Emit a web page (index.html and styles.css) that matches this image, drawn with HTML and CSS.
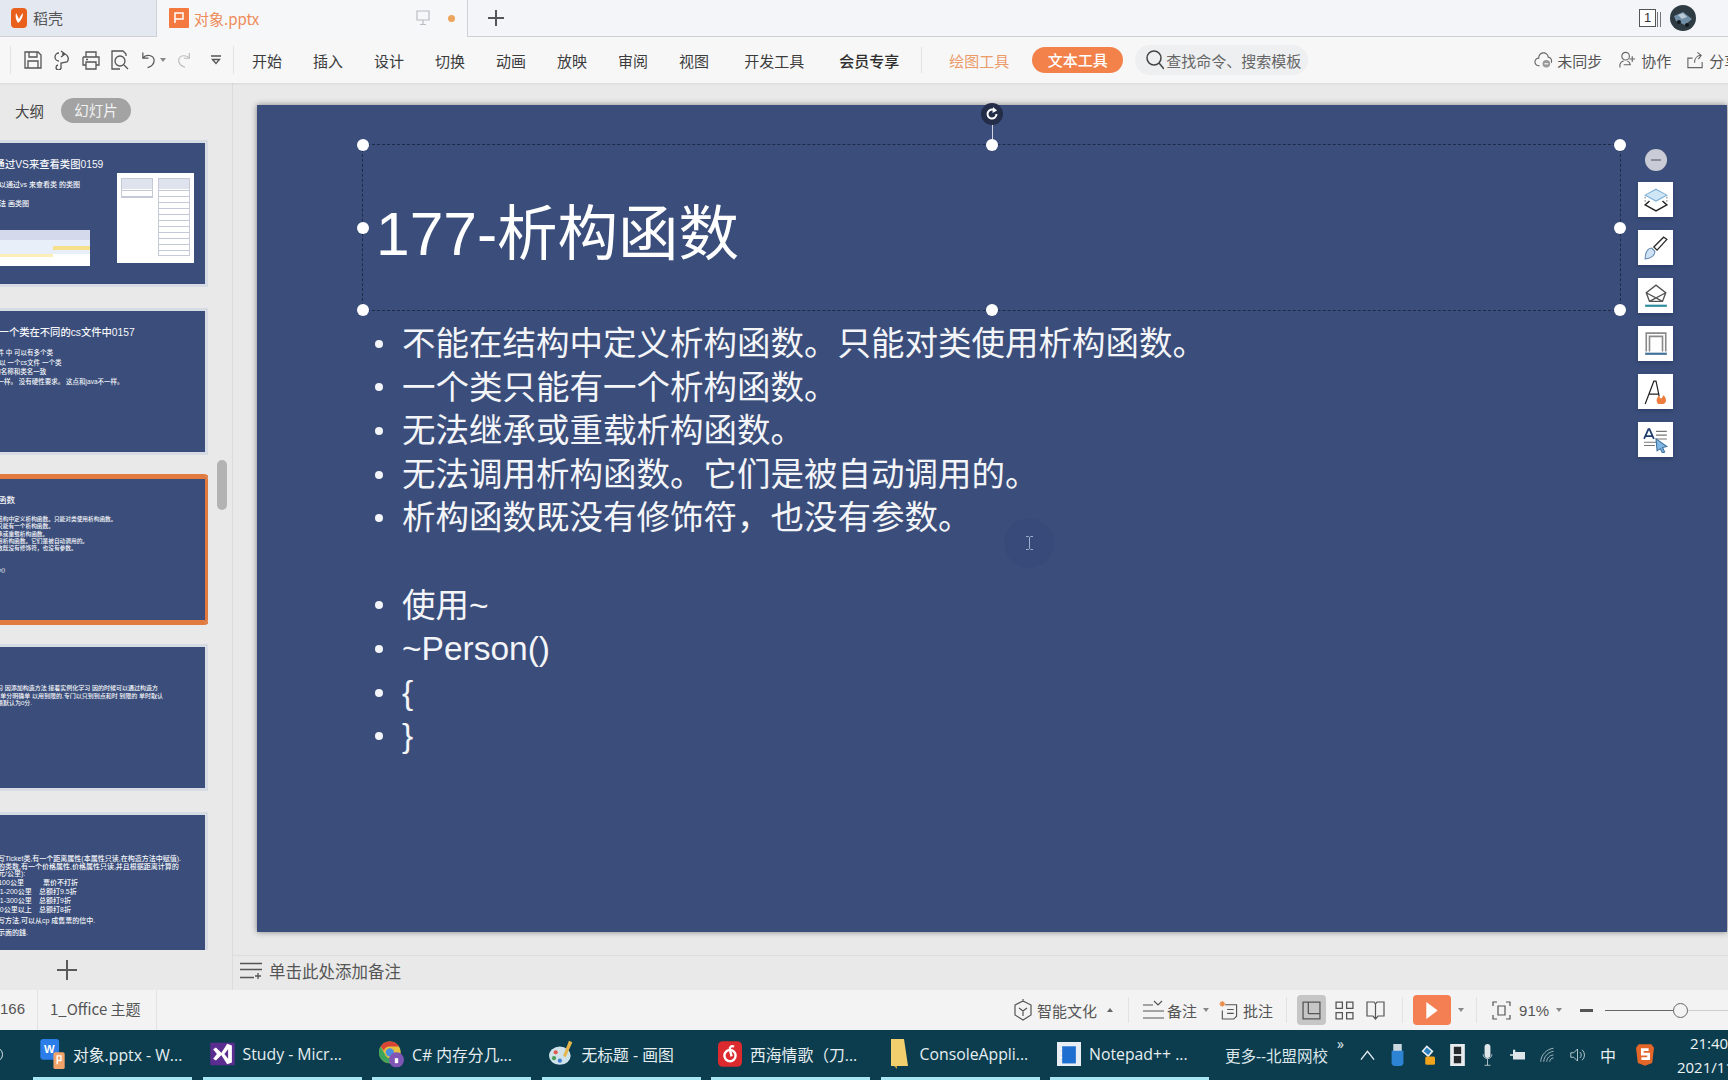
FILE: index.html
```html
<!DOCTYPE html>
<html lang="zh-CN">
<head>
<meta charset="utf-8">
<title>对象.pptx - WPS</title>
<link rel="stylesheet" href="styles.css">
</head>
<body>
<header class="tabbar">
  <div class="tab tab-home">
    <svg class="tab-logo" viewBox="0 0 16 20"><path fill="#e8601c" d="M4 0h8a4 4 0 0 1 4 4v12a4 4 0 0 1-4 4H4a4 4 0 0 1-4-4V4a4 4 0 0 1 4-4z"/><path fill="#fff" d="M5 5c-1 4 0 7 2 10 3-2 5-6 5-10-2 2-3 4-4 6-1-2-2-4-3-6z"/></svg>
    <span>稻壳</span>
  </div>
  <div class="tab tab-active">
    <svg class="tab-logo-p" viewBox="0 0 20 20"><rect width="20" height="20" rx="1" fill="#f4793f"/><path fill="none" stroke="#fff" stroke-width="1.5" d="M6 15V5h8v6H6"/></svg>
    <span class="tab-name">对象.pptx</span>
    <svg class="tab-mon" viewBox="0 0 14 16"><path fill="none" stroke="#b9bcc2" stroke-width="1.2" d="M1 1h12v9H1zM7 10v4M4 14.500h6"/></svg>
    <span class="tab-dot"></span>
  </div>
  <svg class="tab-plus" viewBox="0 0 16 16"><path stroke="#555" stroke-width="2" d="M8 0v16M0 8h16"/></svg>
  <div class="tabbar-right">
    <span class="page-count">1</span>
    <span class="page-bars"></span>
    <svg class="avatar" viewBox="0 0 26 26"><circle cx="13" cy="13" r="13" fill="#2f3b42"/><path fill="#6f8ea6" d="M4 11l9-4 9 7-7 6-9-4z"/><path fill="#b9c9d6" d="M8 10l5-2 4 4-5 2z"/><circle cx="9" cy="17" r="2" fill="#11181c"/><circle cx="17" cy="20" r="2" fill="#11181c"/></svg>
  </div>
</header>

<nav class="toolbar">
  <div class="quick">
    <svg class="qi" viewBox="0 0 20 20"><path d="M2 2h13l3 3v13H2zM6 2v5h8V2M5 18v-7h10v7"/></svg>
    <svg class="qi" viewBox="0 0 20 20"><path d="M7 3a4 4 0 0 0 0 8M9 1l4 3-4 3M13 4h-3M13 4a5 5 0 0 1 2 8l-6 1v6M6 15a2.500 2.500 0 1 0 3 3"/></svg>
    <svg class="qi" viewBox="0 0 20 20"><path d="M5 7V2h10v5M2 7h16v8h-3M5 15H2V7M5 12h10v7H5zM5 9.500h2"/></svg>
    <svg class="qi qi-wide" viewBox="0 0 20 20"><path d="M10 19H2V1h11l3 3v2"/><circle cx="10" cy="11" r="5"/><path d="M14 15l4 4"/></svg>
    <svg class="qi qi-undo" viewBox="0 0 18 20"><path d="M3 2v6h6M3 8c3-4 11-4 12 2 0 4-3 7-7 8"/></svg>
    <span class="caret"></span>
    <svg class="qi qi-redo" viewBox="0 0 18 20"><path d="M15 2v6H9M15 8c-3-4-11-4-12 2 0 4 3 7 7 8"/></svg>
    <svg class="qi qi-more" viewBox="0 0 12 12"><path d="M1 2h10M2.500 5.500l3.500 4 3.500-4z"/></svg>
  </div>
  <div class="menu">
    <span>开始</span><span>插入</span><span>设计</span><span>切换</span><span>动画</span><span>放映</span><span>审阅</span><span>视图</span><span class="menu-wide">开发工具</span><span class="menu-vip">会员专享</span>
  </div>
  <span class="tool-sep"></span>
  <span class="menu-draw">绘图工具</span>
  <span class="menu-pill">文本工具</span>
  <div class="search">
    <svg class="search-ic" viewBox="0 0 18 20"><circle cx="8" cy="8" r="7"/><path d="M13 13l5 6"/></svg>
    <span>查找命令、搜索模板</span>
  </div>
  <div class="tool-right">
    <span class="tr-item tr-cloud"><svg class="tr-ic" viewBox="0 0 20 18"><path d="M6 15H5a4 4 0 0 1 0-8 5 5 0 0 1 10-1 4 4 0 0 1 3 6"/><circle cx="13" cy="13" r="4" fill="#999" stroke="none"/><path stroke="#fff" d="M11 13h4"/></svg>未同步</span>
    <span class="tr-item tr-collab"><svg class="tr-ic" viewBox="0 0 20 18"><circle cx="8" cy="5" r="4"/><path d="M2 17v-3a5 5 0 0 1 4-4M10 10a5 5 0 0 1 3 4H6M15 5v6M12 8h6"/></svg>协作</span>
    <span class="tr-item tr-share"><svg class="tr-ic" viewBox="0 0 20 18"><path d="M7 7H2v10h15v-6M9 12c0-5 3-8 7-8M12 1l4 3-3 4"/></svg>分享</span>
  </div>
</nav>

<main class="workspace">
  <aside class="sidebar">
    <div class="side-tabs">
      <span class="side-tab">大纲</span>
      <span class="side-pill">幻灯片</span>
    </div>
    <div class="thumbs">
      <article class="thumb">
        <div class="t-slide">
          <h3 class="t-title t-title-one">178-通过VS来查看类图0159</h3>
          <p class="t-line">我们可以通过vs 来查看类 的类图</p>
          <p class="t-line t-gap">快捷方法 画类图</p>
          <div class="t-img-a"><i></i><i></i></div>
          <div class="t-img-b"><span></span><span class="long"></span></div>
        </div>
      </article>
      <article class="thumb">
        <div class="t-slide">
          <h3 class="t-title">176-一个类在不同的cs文件中0157</h3>
          <p class="t-line t-dense">一个文件 中 可以有多个类</p>
          <p class="t-line t-dense">我们 可以 一个cs文件 一个类</p>
          <p class="t-line t-dense">c文件的名称和类名一致</p>
          <p class="t-line t-dense">如果不一样。 没有硬性要求。 这点和java不一样。</p>
        </div>
      </article>
      <article class="thumb thumb-on">
        <div class="t-slide">
          <h3 class="t-title t-title-sel">177-析构函数</h3>
          <p class="t-body">不能在结构中定义析构函数。只能对类使用析构函数。</p>
          <p class="t-body">一个类只能有一个析构函数。</p>
          <p class="t-body">无法继承或重载析构函数。</p>
          <p class="t-body">无法调用析构函数。它们是被自动调用的。</p>
          <p class="t-body">析构函数既没有修饰符，也没有参数。</p>
          <p class="t-body">&nbsp;</p>
          <p class="t-body">使用~</p>
          <p class="t-body">~Person()</p>
        </div>
      </article>
      <article class="thumb">
        <div class="t-slide t-slide-four">
          <p class="t-tiny">引时学习 因添加构造方法 接着实例化学习 因的时候可以通过构造方</p>
          <p class="t-tiny">法,对 则单分明确单 以用到限的,专门以只到到点和时 到限的 单时取认</p>
          <p class="t-tiny">通数成绩默认为0分.</p>
        </div>
      </article>
      <article class="thumb thumb-last">
        <div class="t-slide t-slide-five">
          <p class="t-tiny">写Ticket类,有一个距离属性(本属性只读,在构造方法中赋值).</p>
          <p class="t-tiny">的类数,有一个价格属性,价格属性只读,并且根据距离计算的</p>
          <p class="t-tiny">元/公里):</p>
          <p class="t-tiny t-pre"><span class="t-col t-col-wide">0-100公里</span>票价不打折</p>
          <p class="t-tiny t-pre"><span class="t-col">101-200公里</span>总额打9.5折</p>
          <p class="t-tiny t-pre"><span class="t-col">201-300公里</span>总额打9折</p>
          <p class="t-tiny t-pre"><span class="t-col">300公里以上</span>总额打8折</p>
          <p class="t-tiny t-pre2">写方法,可以从cp 成售票的信中.</p>
          <p class="t-tiny t-pre2">示面的錢.</p>
        </div>
      </article>
    </div>
    <span class="scroll-thumb"></span>
    <div class="side-add">
      <svg class="add-ic" viewBox="0 0 20 20"><path stroke="#5a5a5a" stroke-width="2" d="M10 0v20M0 10h20"/></svg>
    </div>
  </aside>

  <section class="editor">
    <div class="stage">
      <div class="slide">
        <div class="frame">
          <h1 class="slide-title">177-析构函数</h1>
          <span class="rot-line"></span>
          <span class="rot"><svg viewBox="0 0 14 14"><path fill="none" stroke="#fff" stroke-width="2" d="M11.500 7a4.500 4.500 0 1 1-2-3.700"/><path fill="#fff" d="M8 0l4 3.500L7.500 6z"/></svg></span>
          <span class="hd hd-tl"></span><span class="hd hd-tc"></span><span class="hd hd-tr"></span>
          <span class="hd hd-ml"></span><span class="hd hd-mr"></span>
          <span class="hd hd-bl"></span><span class="hd hd-bc"></span><span class="hd hd-br"></span>
        </div>
        <ul class="bullets">
          <li>不能在结构中定义析构函数。只能对类使用析构函数。</li>
          <li>一个类只能有一个析构函数。</li>
          <li>无法继承或重载析构函数。</li>
          <li>无法调用析构函数。它们是被自动调用的。</li>
          <li>析构函数既没有修饰符，也没有参数。</li>
          <li class="blank"></li>
          <li>使用~</li>
          <li>~Person()</li>
          <li>{</li>
          <li>}</li>
        </ul>
        <div class="float-tools">
          <span class="ft-min"></span>
          <span class="ft"><svg viewBox="0 0 24 24"><path fill="#cfe6f7" stroke="#7fb0d6" d="M12 2l10 5.500-10 5.500L2 7.500z"/><path fill="none" stroke="#222" stroke-width="1.300" d="M6 13l-4 3.500 10 5.500 10-5.500-4-3.500"/><path fill="none" stroke="#8a8a8a" stroke-dasharray="1.500 1.500" d="M2 9v6M22 9v6"/></svg></span>
          <span class="ft"><svg viewBox="0 0 24 24"><path fill="#cfe2f5" stroke="#6d8fb3" d="M2 22c0-7 3-10 6-10l3 3c0 4-4 7-9 7z"/><path fill="#fff" stroke="#2a2a2a" stroke-width="1.200" d="M10 11l9-9 3 2-9 10z"/></svg></span>
          <span class="ft"><svg viewBox="0 0 24 24"><path fill="none" stroke="#555" stroke-width="1.300" d="M3 9l9-7 9 7-3 8H6zM3 9l15 8M21 9L6 17"/><path stroke="#2a8c9c" stroke-width="2" d="M2 21h20"/></svg></span>
          <span class="ft"><svg viewBox="0 0 24 24"><path fill="none" stroke="#8a8a8a" stroke-width="1.500" d="M3 19V2h18v17M6 19V5h12v14"/><path stroke="#3f7196" stroke-width="2" d="M2 21h20"/></svg></span>
          <span class="ft"><svg viewBox="0 0 24 24"><path fill="none" stroke="#222" stroke-width="1.100" d="M2 23L10 2h2l3 14M5.500 14h9"/><path fill="#ee7d3d" d="M14 23c-2-2-2-5 1-8 0 2 1 3 2 3 1-1 1-2 2-3 3 3 3 7 0 8z"/></svg></span>
          <span class="ft"><svg viewBox="0 0 24 24"><path fill="none" stroke="#1f3b6e" stroke-width="1.600" d="M1 11L5 2h1l4 9M2.500 8.500h6"/><path stroke="#777" d="M12 4h10M12 7.500h10M12 11h10M1 14h12M1 17h10"/><path fill="#7fb8e6" stroke="#3e6f9c" d="M12 11l10 7-4 1 2 4-2 1-2-4-3 2z"/></svg></span>
        </div>
        <span class="halo"></span>
        <svg class="ibeam" viewBox="0 0 7 14"><path fill="none" stroke="#9fb0cc" d="M0 .5h2.500L3.500 1.500 4.500.5H7M3.500 1.500v11M0 13.500h2.500l1-1 1 1H7"/></svg>
      </div>
    </div>
    <div class="notes">
      <svg class="notes-ic" viewBox="0 0 22 18"><path stroke="#555" stroke-width="1.300" d="M0 1.500h22M0 7.500h22M0 15.500h14M18 11v6M15 14h6"/></svg>
      <span>单击此处添加备注</span>
    </div>
  </section>
</main>

<footer class="status">
  <span class="st-page">166</span>
  <span class="st-theme">1_Office 主题</span>
  <div class="st-right">
    <svg class="st-ic st-ic-smart" viewBox="0 0 18 22"><path d="M1 6l8-4 8 4v10l-8 5-8-5zM5 9l4 3 4-3M9 12v5M9 0v3"/></svg>
    <span class="st-t1">智能文化</span>
    <span class="up-caret"></span>
    <span class="st-div st-d1"></span>
    <svg class="st-ic st-ic-notes" viewBox="0 0 21 20"><path d="M0 5h10M0 11h21M0 18h21M11 1l4 4 4-4"/></svg>
    <span>备注</span>
    <span class="caret caret-st"></span>
    <svg class="st-ic st-ic-cmt" viewBox="0 0 19 20"><path d="M6 4h12v12l-3 3H3v-9M8 9h7M8 13h7"/><path stroke="#ea8a4a" d="M3 0v6M0 3h6M1 1l4 4M5 1L1 5"/></svg>
    <span>批注</span>
    <span class="st-div st-d2"></span>
    <span class="view-on"><svg class="st-ic" viewBox="0 0 18 18"><path d="M1 1h16v16H1zM6 1v11M6 12h11"/></svg></span>
    <svg class="st-ic st-ic-grid" viewBox="0 0 18 18"><path d="M1 1h6v6H1zM11 1h6v6h-6zM1 11h6v6H1zM11 11h6v6h-6z"/></svg>
    <svg class="st-ic st-ic-book" viewBox="0 0 19 19"><path d="M1 1h7l1.500 2L11 1h7v14h-6l-2.500 3L7 15H1zM9.500 3v15"/></svg>
    <span class="st-div st-d3"></span>
    <span class="play"><svg viewBox="0 0 12 18"><path fill="#fff" d="M0 0l12 9-12 9z"/></svg></span>
    <span class="caret caret-play"></span>
    <span class="st-div st-d4"></span>
    <svg class="st-ic st-ic-fit" viewBox="0 0 19 19"><path d="M1 5V1h4M14 1h4v4M18 14v4h-4M5 18H1v-4M6 5h7v9H6z"/></svg>
    <span class="st-zoom">91%</span>
    <span class="caret caret-st"></span>
    <span class="st-minus"></span>
    <div class="slider"><span class="sl-knob"></span></div>
  </div>
</footer>

<footer class="taskbar">
  <span class="start-edge"></span>
  <div class="task-items">
    <div class="task">
      <svg class="task-ic" viewBox="0 0 26 32"><rect width="20" height="22" rx="3" fill="#2b7de9"/><text x="4" y="15" class="ic-letter">W</text><rect x="14" y="14" width="12" height="18" rx="2" fill="#f2a36a"/><path fill="none" stroke="#fff" stroke-width="1.500" d="M18 27v-9h4v5h-4"/></svg>
      <span>对象.pptx - W...</span>
    </div>
    <div class="task">
      <svg class="task-ic" viewBox="0 0 26 32"><path fill="#5c2d91" d="M0 4h26v24H0z"/><path fill="#fff" d="M3 11l3-2 7 7-7 7-3-2 4-5zM23 7v18l-5 2-7-11 7-11zM19 11l-4 5 4 5z"/></svg>
      <span>Study - Micr...</span>
    </div>
    <div class="task">
      <svg class="task-ic" viewBox="0 0 30 32"><circle cx="13" cy="14" r="13" fill="#e9c141"/><path fill="#d94436" d="M13 1a13 13 0 0 1 11 6H13a7 7 0 0 0-7 5L2 7a13 13 0 0 1 11-6z"/><path fill="#3ba55d" d="M2 7l6 11a7 7 0 0 0 7 3l-3 6A13 13 0 0 1 2 7z"/><circle cx="13" cy="14" r="5" fill="#4a8fe0"/><circle cx="21" cy="23" r="9" fill="#7f55b5"/><path fill="#fff" d="M19 21h4v6h-4z"/></svg>
      <span>C# 内存分几...</span>
    </div>
    <div class="task">
      <svg class="task-ic" viewBox="0 0 30 32"><ellipse cx="13" cy="18" rx="13" ry="11" fill="#cfe2ea"/><circle cx="8" cy="14" r="2.500" fill="#e05a4f"/><circle cx="6" cy="21" r="2.500" fill="#4a9e58"/><circle cx="13" cy="24" r="2.500" fill="#3f7fd1"/><path fill="#e6b64a" d="M24 0l4 2-8 18-3-2z"/></svg>
      <span>无标题 - 画图</span>
    </div>
    <div class="task">
      <svg class="task-ic task-ic-ne" viewBox="0 0 30 32"><rect width="30" height="32" rx="6" fill="#dc2a2e"/><circle cx="15" cy="18" r="7" fill="none" stroke="#fff" stroke-width="3"/><path fill="none" stroke="#fff" stroke-width="3" d="M20 7c-3-2-6 0-5 4l2 8"/></svg>
      <span>西海情歌（刀...</span>
    </div>
    <div class="task">
      <svg class="task-ic task-ic-fd" viewBox="0 0 18 30"><path fill="#f2cf6d" d="M0 0h13l4 27-17 0z"/><path fill="#c99b3b" d="M3 27l3 3v-3z"/></svg>
      <span>ConsoleAppli...</span>
    </div>
    <div class="task">
      <svg class="task-ic task-ic-np" viewBox="0 0 28 28"><rect width="28" height="28" fill="#e8eef4"/><rect x="6" y="5" width="16" height="20" fill="#1f6fd1"/><path stroke="#fff" d="M3 8h3M3 13h3M3 18h3"/></svg>
      <span>Notepad++ ...</span>
    </div>
  </div>
  <span class="tray-title">更多--北盟网校</span>
  <span class="tray-more">»</span>
  <div class="tray">
    <svg class="tr-ico" viewBox="0 0 16 12"><path fill="none" stroke="#e6f0f3" stroke-width="1.400" d="M1 11l7-9 7 9"/></svg>
    <svg class="tr-ico" viewBox="0 0 16 26"><rect x="3" y="0" width="10" height="9" fill="#cdd9e0"/><path fill="#2d83d4" d="M1 8h14v14a4 4 0 0 1-4 4H5a4 4 0 0 1-4-4z"/></svg>
    <svg class="tr-ico" viewBox="0 0 20 26"><path fill="#e8eef2" d="M9 0l9 8-7 8-9-8z"/><path fill="#2a7fc0" d="M9 3l6 5-4 5-6-5z"/><rect x="7" y="15" width="13" height="11" rx="2" fill="#f0a31c"/></svg>
    <svg class="tr-ico" viewBox="0 0 16 24"><rect width="16" height="24" fill="#e8ecef"/><rect x="4" y="3" width="8" height="8" fill="#26292c"/><rect x="4" y="13" width="8" height="8" fill="#26292c"/></svg>
    <svg class="tr-ico" viewBox="0 0 14 30"><rect x="3" width="8" height="19" rx="4" fill="#dfe6ea"/><path fill="none" stroke="#dfe6ea" d="M1 14a6 6 0 0 0 12 0M7 20v9M3 29h8"/></svg>
    <svg class="tr-ico" viewBox="0 0 20 14"><path fill="#dfe6ea" d="M4 3h16v10H4zM0 6h4v2H0zM4 0h3v3H4z"/></svg>
    <svg class="tr-ico" viewBox="0 0 20 20"><path fill="none" stroke="#cfd8dc" d="M1 19c0-9 8-17 17-18M5 19c0-7 6-13 13-14M9 19c0-5 4-9 9-9M13 19c0-3 2-5 5-5"/></svg>
    <svg class="tr-ico" viewBox="0 0 20 20"><path fill="none" stroke="#e6edf0" d="M1 7h4l5-5v16l-5-5H1zM13 6a5 5 0 0 1 0 8M16 3a9 9 0 0 1 0 14"/></svg>
    <span class="tray-ime">中</span>
    <svg class="tr-ico tr-sogou" viewBox="0 0 20 24"><path fill="#e4672a" d="M3 0h14l3 4-2 17-8 3-8-3L0 4z"/><path fill="none" stroke="#fff" stroke-width="3" d="M14 6H7v5h7v5H6"/></svg>
  </div>
  <div class="clock">
    <span class="clock-time">21:40</span>
    <span>2021/11/29</span>
  </div>
</footer>
</body>
</html>
```

FILE: styles.css
```css
* { box-sizing: border-box; }
html, body { margin: 0; padding: 0; height: 1080px; overflow: hidden; }
body {
  display: flex;
  flex-direction: column;
  width: 1728px;
  font-family: "Noto Sans CJK SC", "Noto Sans", sans-serif;
  font-size: 15px;
  color: #444;
  background: #e9e9e9;
}
svg { display: block; flex: none; }

/* tab bar */
.tabbar {
  display: flex;
  align-items: center;
  height: 37px;
  flex: none;
  background: #f3f5f8;
  border-bottom: 1px solid #cfd1d6;
}
.tab { display: flex; align-items: center; height: 37px; white-space: nowrap; }
.tab-home { width: 156px; padding-left: 11px; background: #e4e8f1; border-bottom: 1px solid #cfd1d6; color: #555; }
.tab-logo { width: 16px; height: 20px; margin-right: 6px; }
.tab-active { width: 312px; padding-left: 12px; background: #f6f7f9; border-right: 1px solid #cfd1d6; border-left: 1px solid #cfd1d6; height: 37px; }
.tab-logo-p { width: 20px; height: 20px; margin-right: 5px; }
.tab-name { color: #ee8b58; width: 222px; }
.tab-mon { width: 14px; height: 16px; margin-right: 18px; }
.tab-dot { width: 7px; height: 7px; border-radius: 50%; background: #eea65f; }
.tab-plus { width: 16px; height: 16px; margin-left: 20px; }
.tabbar-right { display: flex; align-items: center; margin-left: auto; padding-right: 32px; }
.page-count {
  width: 17px; height: 18px; border: 1px solid #555; font: 13px/16px "Liberation Sans", sans-serif;
  text-align: center; color: #333; background: #fff;
}
.page-bars { width: 4px; height: 15px; border-left: 1px solid #777; border-right: 1px solid #777; margin: 3px 9px 0 1px; }
.avatar { width: 26px; height: 26px; }

/* toolbar */
.toolbar {
  display: flex;
  align-items: center;
  height: 46px;
  flex: none;
  background: #f7f7f8;
  white-space: nowrap;
  overflow: hidden;
  box-shadow: 0 1px 2px rgba(0,0,0,.08);
  position: relative;
  z-index: 2;
}
.toolbar > * { flex: none; }
.quick {
  display: flex; align-items: center; width: 224px; height: 28px; margin-left: 10px;
  padding-left: 12px; border-left: 1px solid #e3e3e3; border-right: 1px solid #e3e3e3;
}
.qi { width: 20px; height: 20px; margin-right: 9px; fill: none; stroke: #555; stroke-width: 1.3; }
.qi-wide { margin-right: 10px; }
.qi-undo { width: 17px; margin-right: 3px; }
.qi-redo { width: 16px; margin: 0 18px 0 10px; stroke: #bbb; }
.qi-more { width: 12px; height: 12px; margin: 0; }
.caret { width: 0; height: 0; border: 3px solid transparent; border-top: 4px solid #888; border-bottom: 0; flex: none; }
.menu { display: flex; gap: 31px; margin-left: 18px; color: #3c3c3c; }
.menu-wide { margin-left: 4px; }
.menu-vip { margin-left: 4px; font-weight: 500; color: #2e2e2e; }
.tool-sep { width: 1px; height: 26px; background: #e2e2e2; margin-left: 22px; }
.menu-draw { margin-left: 27px; color: #ec9a68; }
.menu-pill {
  width: 91px; height: 26px; margin-left: 23px; border-radius: 13px; background: #f2824a; color: #fff;
  text-align: center; line-height: 25px; font-weight: 500;
}
.search {
  display: flex; align-items: center; width: 173px; height: 30px; margin-left: 12px; padding-left: 11px;
  border-radius: 15px; background: #eeeff1; color: #666;
}
.search-ic { width: 18px; height: 20px; margin-right: 2px; fill: none; stroke: #444; stroke-width: 1.500; }
.tool-right { display: flex; margin-left: 226px; color: #555; }
.tr-item { display: flex; align-items: center; }
.tr-ic { width: 19px; height: 18px; margin-right: 4px; fill: none; stroke: #666; stroke-width: 1.200; }
.tr-collab { margin-left: 16px; }
.tr-share { margin-left: 15px; }

/* workspace */
.workspace { display: flex; flex: 1; min-height: 0; }
.sidebar {
  position: relative;
  display: flex;
  flex-direction: column;
  width: 233px;
  flex: none;
  background: #e9e9e9;
  border-right: 1px solid #dcdcdc;
  overflow: hidden;
}
.side-tabs { display: flex; align-items: center; height: 55px; flex: none; margin-bottom: 2px; padding: 0 0 0 15px; }
.side-tab { color: #444; width: 46px; font-size: 14.500px; }
.side-pill {
  width: 70px; height: 25px; border-radius: 13px; background: #a3a3a3; color: #f2f2f2;
  text-align: center; line-height: 24px; font-size: 14.500px;
}
.thumbs {
  display: flex; flex-direction: column; gap: 21px; height: 810px; flex: none;
  width: 254px; margin-left: -46px; overflow: hidden;
}
.thumb { flex: none; height: 147px; border: 3px solid #d7dbe4; border-left-width: 3px; }
.thumb-on { border-color: #e07a3e; border-radius: 4px; box-shadow: 0 0 0 2px #e07a3e; }
.thumb-last { height: 147px; }
.t-slide {
  position: relative; height: 100%; background: #3b4e7b; color: #f6f7fa; overflow: hidden;
  padding: 15px 0 0 21px; font-family: "Liberation Sans", "Noto Sans CJK SC", sans-serif; font-weight: 500;
}
.t-title { margin: 0; font-size: 10.300px; font-weight: 500; line-height: 13px; white-space: nowrap; }
.t-title-one { margin-left: -4px; }
.t-title-sel { font-size: 8.500px; margin: 0 0 9px -14px; }
.t-line { margin: 10px 0 0; font-size: 7px; line-height: 8px; white-space: nowrap; }
.t-gap { margin-top: 11px; }
.t-dense { margin: 1.500px 0 0; line-height: 8px; font-size: 6.500px; }
.t-dense:first-of-type { margin-top: 10px; }
.t-body { margin: 0 0 0 2px; font-size: 5.700px; line-height: 7.300px; white-space: nowrap; }
.t-tiny { margin: 0; font-size: 6px; line-height: 7.500px; white-space: nowrap; }
.t-slide-four { padding: 38px 0 0 22px; }
.t-slide-five { padding: 40px 0 0 41px; }
.t-slide-five .t-tiny { font-size: 7px; }
.t-pre { display: flex; line-height: 9.300px; margin-left: -6px; }
.t-col { width: 47px; flex: none; }
.t-col-wide { width: 51px; }
.t-pre2 { line-height: 10.500px; margin-top: 1.500px; }
.t-img-a {
  position: absolute; left: 160px; top: 30px; width: 77px; height: 90px; background: #fff;
  display: flex; gap: 5px; padding: 5px 4px;
}
.t-img-a i {
  flex: 1; height: 20px; border: 1px solid #c5cad6;
  background: linear-gradient(#dfe3ee 0 10px, transparent 10px), repeating-linear-gradient(#fff 0 5px, #c3c9d6 5px 6px);
}
.t-img-a i:last-child { height: 78px; }
.t-img-b {
  position: absolute; left: 43px; top: 87px; width: 90px; height: 36px;
  background: linear-gradient(#d5d9ec 0 10px, #e8eff8 10px 24px, #fff 24px);
}
.t-img-b span { position: absolute; left: 0; top: 24px; width: 53px; height: 3px; background: #fbeeb7; }
.t-img-b .long { left: 53px; top: 16px; width: 37px; height: 4px; background: #f7e08c; }
.scroll-thumb {
  position: absolute; left: 217px; top: 377px; width: 10px; height: 50px; border-radius: 5px; background: #b3b3b3;
}
.side-add { display: flex; align-items: center; justify-content: flex-start; height: 40px; padding-left: 57px; flex: none; }
.add-ic { width: 20px; height: 20px; }

.editor { display: flex; flex-direction: column; flex: 1; min-width: 0; }
.stage { flex: 1; padding: 22px 0 0 24px; overflow: hidden; background: #e9e9e9; }
.slide {
  position: relative;
  width: 1470px; height: 827px; padding: 39px 0 0 105px;
  background: #3b4e7b;
  box-shadow: 0 0 6px rgba(0,0,0,.45);
  font-family: "Liberation Sans", "Noto Sans CJK SC", sans-serif;
  color: #fff;
}
.frame {
  position: relative; display: flex; align-items: center; width: 1259px; height: 167px;
  padding: 13px 0 0 13px; border: 1px dashed #1d2a48;
}
.slide-title { margin: 0; font-size: 60.500px; font-weight: 400; line-height: 1; }
.hd { position: absolute; width: 12px; height: 12px; margin: -6px 0 0 -6px; border-radius: 50%; background: #fff; }
.hd-tl { left: 0; top: 0; } .hd-tc { left: 50%; top: 0; } .hd-tr { left: 100%; top: 0; }
.hd-ml { left: 0; top: 50%; } .hd-mr { left: 100%; top: 50%; }
.hd-bl { left: 0; top: 100%; } .hd-bc { left: 50%; top: 100%; } .hd-br { left: 100%; top: 100%; }
.rot {
  position: absolute; left: 50%; top: -42px; width: 22px; height: 22px; margin-left: -11px; padding: 4px;
  border-radius: 50%; background: #232d48;
}
.rot-line { position: absolute; left: 50%; top: -22px; width: 1px; height: 22px; background: #cfd5e2; }
.bullets { list-style: none; margin: 11px 0 0 13px; padding: 0; }
.bullets li {
  display: flex; align-items: center; gap: 19px; height: 43.600px; line-height: 43.600px; font-size: 33.500px; white-space: nowrap;
  color: #f4f5f8;
}
.bullets li::before { content: ""; width: 8px; height: 8px; border-radius: 50%; background: #f4f5f8; flex: none; }
.bullets .blank::before { display: none; }
.float-tools {
  position: absolute; left: 1381px; top: 44px; display: flex; flex-direction: column; align-items: center; gap: 13px; width: 35px;
}
.ft-min {
  position: relative; width: 22px; height: 22px; margin-bottom: -2px; border-radius: 50%; background: #c9ccd6;
}
.ft-min::after { content: ""; position: absolute; left: 6px; top: 10px; width: 10px; height: 2px; background: #8b8e98; }
.ft { display: flex; align-items: center; justify-content: center; width: 35px; height: 35px; background: #fff; box-shadow: 0 2px 4px rgba(20,30,60,.3); }
.ft svg { width: 26px; height: 26px; }
.halo { position: absolute; left: 747px; top: 413px; width: 50px; height: 50px; border-radius: 50%; background: rgba(46,62,112,.22); }
.ibeam { position: absolute; left: 769px; top: 431px; width: 7px; height: 14px; }

.notes {
  display: flex; align-items: center; gap: 7px; height: 35px; flex: none; padding: 0 0 4px 7px;
  border-top: 1px solid #dedede; background: #e9e9e9; color: #555; font-size: 16.500px;
}
.notes-ic { width: 22px; height: 18px; }

/* status */
.status {
  display: flex; align-items: center; height: 40px; flex: none; background: #f3f3f3; color: #555; white-space: nowrap;
}
.st-page { width: 38px; height: 40px; line-height: 38px; border-right: 1px solid #e2e2e2; font-size: 15px; font-family: "Liberation Sans", sans-serif; }
.st-theme { width: 119px; padding-left: 12px; height: 40px; line-height: 38px; border-right: 1px solid #e2e2e2; }
.st-right { display: flex; align-items: center; margin-left: auto; width: 714px; }
.st-ic { width: 19px; height: 19px; fill: none; stroke: #555; stroke-width: 1.200; }
.st-ic-smart { width: 18px; height: 22px; margin-right: 5px; }
.st-t1 { margin-right: 10px; }
.up-caret { width: 0; height: 0; border: 3px solid transparent; border-bottom: 4px solid #666; border-top: 0; }
.st-div { width: 1px; height: 26px; background: #e2e2e2; flex: none; }
.st-d1 { margin: 0 14px 0 15px; }
.st-d2 { margin: 0 10px 0 13px; }
.st-d3 { margin: 0 10px 0 17px; }
.st-d4 { margin: 0 15px 0 12px; }
.st-ic-notes { width: 21px; height: 20px; margin-right: 3px; }
.caret-st { margin: 0 10px 0 6px; }
.st-ic-cmt { margin-right: 5px; }
.view-on { display: flex; align-items: center; justify-content: center; width: 29px; height: 30px; border-radius: 4px; background: #c6c6c6; margin-right: 9px; }
.st-ic-grid { margin-right: 12px; }
.play { display: flex; align-items: center; justify-content: center; width: 38px; height: 30px; border-radius: 4px; background: #f47f52; }
.play svg { width: 12px; height: 17px; }
.caret-play { margin-left: 7px; }
.st-ic-fit { margin-right: 8px; }
.st-zoom { font-family: "Liberation Sans", sans-serif; width: 31px; }
.st-minus { width: 13px; height: 3px; background: #555; margin: 0 12px 0 8px; }
.slider { position: relative; flex: 1; height: 1px; background: linear-gradient(90deg, #666 76px, #cfcfcf 76px); }
.sl-knob { position: absolute; left: 68px; top: -7px; width: 15px; height: 15px; border-radius: 50%; border: 1px solid #666; background: #f3f3f3; }

/* taskbar */
.taskbar {
  position: relative; display: flex; align-items: center; height: 50px; flex: none; background: #0b3d4e; color: #e6eef1; white-space: nowrap;
  font-family: "Open Sans", "Noto Sans CJK SC", sans-serif; overflow: hidden;
}
.taskbar > * { flex: none; }
.start-edge { position: absolute; left: -12px; top: 17px; width: 15px; height: 15px; border: 1px solid #dfe8ec; border-radius: 50%; }
.task-items { display: flex; gap: 10.500px; margin-left: 33px; height: 50px; }
.task { position: relative; display: flex; align-items: center; gap: 8px; width: 159px; height: 50px; padding: 0 0 2px 7px; font-size: 15.800px; overflow: hidden; }
.task::after { content: ""; position: absolute; left: 0; right: 0; bottom: 0; height: 3px; background: #a8e6f6; }
.task-ic { width: 25px; height: 30px; }
.task-ic-ne { width: 24px; }
.task-ic-fd { width: 18px; margin: 0 3px 0 3px; }
.task-ic-np { width: 24px; height: 24px; }
.ic-letter { font: 700 12px "Liberation Sans", sans-serif; fill: #fff; }
.tray-title { margin-left: 16px; font-size: 15.500px; color: #dbe6ea; }
.tray-more { margin: -24px 0 0 9px; font-size: 14px; }
.tray { display: flex; align-items: center; gap: 15px; margin-left: 16px; }
.tr-ico { width: 15px; height: 22px; }
.tray-ime { font-size: 16px; }
.tr-sogou { width: 18px; height: 24px; margin-left: 5px; }
.clock { display: flex; flex-direction: column; margin-left: 23px; font-size: 15px; line-height: 24px; color: #eef4f6; }
.clock-time { padding-left: 13px; }
```
